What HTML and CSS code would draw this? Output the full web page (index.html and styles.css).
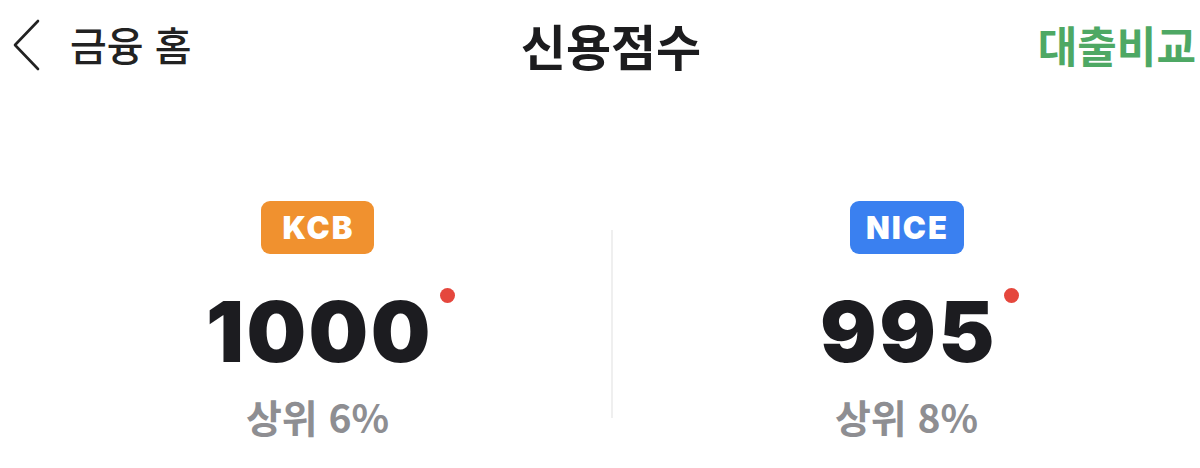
FILE: index.html
```html
<!DOCTYPE html>
<html lang="ko">
<head>
  <meta charset="UTF-8" />
  <meta name="viewport" content="width=device-width, initial-scale=1.0" />
  <title>신용점수</title>
  <link rel="stylesheet" href="styles.css">
</head>
<body>
  <header class="topbar">
    <a class="back" href="#">
      <svg class="chevron" width="30" height="52" viewBox="0 0 30 52">
        <path d="M26 2 L3 26 L26 50" fill="none" stroke="#222" stroke-width="2.6" stroke-linecap="round" stroke-linejoin="round"/>
      </svg>
      <span>금융 홈</span>
    </a>
    <h1 class="title">신용점수</h1>
    <a class="compare" href="#">대출비교</a>
  </header>

  <main class="scores">
    <section class="score">
      <span class="badge kcb">KCB</span>
      <div class="value">1000<i class="dot"></i></div>
      <div class="rank">상위 6%</div>
    </section>
    <div class="divider"></div>
    <section class="score">
      <span class="badge nice">NICE</span>
      <div class="value">995<i class="dot"></i></div>
      <div class="rank">상위 8%</div>
    </section>
  </main>
</body>
</html>
```

FILE: styles.css
```css
body {
  margin: 0;
  background: #fff;
  color: #1c1c1e;
  font-family: "Noto Sans CJK KR", "Noto Sans", sans-serif;
}
.topbar {
  display: grid;
  grid-template-columns: 1fr auto 1fr;
  align-items: center;
  height: 88px;
  padding: 0 0 0 22px;
}
.back {
  display: flex;
  align-items: center;
  gap: 28px;
  margin-left: -10px;
  color: #222;
  text-decoration: none;
  font-size: 40px;
  font-weight: 500;
}
.chevron {
  display: block;
  margin-top: 2px;
}
.title {
  margin: 0;
  font-size: 49px;
  font-weight: 700;
  color: #1c1c1e;
}
.compare {
  justify-self: end;
  margin-right: 4px;
  color: #4ea864;
  font-size: 43px;
  font-weight: 700;
  text-decoration: none;
}
.scores {
  display: flex;
  align-items: flex-start;
  padding: 113px 0 0 24px;
}
.score {
  flex: 1;
  display: flex;
  flex-direction: column;
  align-items: center;
}
.divider {
  width: 2px;
  height: 188px;
  margin-top: 29px;
  background: #efefef;
}
.badge {
  display: flex;
  align-items: center;
  justify-content: center;
  height: 53px;
  border-radius: 9px;
  color: #fff;
  font-family: Inter, "Liberation Sans", sans-serif;
  font-size: 31px;
  font-weight: 900;
  letter-spacing: 2px;
  text-indent: 2px;
}
.kcb {
  width: 113px;
  background: #f0912f;
}
.nice {
  width: 114px;
  background: #3a80f0;
}
.value {
  position: relative;
  margin-top: 32px;
  font-family: Inter, "Liberation Sans", sans-serif;
  font-size: 84px;
  font-weight: 900;
  line-height: 1.1;
  letter-spacing: 2.5px;
  text-indent: 4px;
  color: #1c1c20;
}
.dot {
  position: absolute;
  top: 2px;
  right: -22px;
  width: 15px;
  height: 15px;
  border-radius: 50%;
  background: #e5473d;
}
.rank {
  margin-top: 10px;
  font-size: 39px;
  font-weight: 700;
  color: #8e8e92;
}
```
